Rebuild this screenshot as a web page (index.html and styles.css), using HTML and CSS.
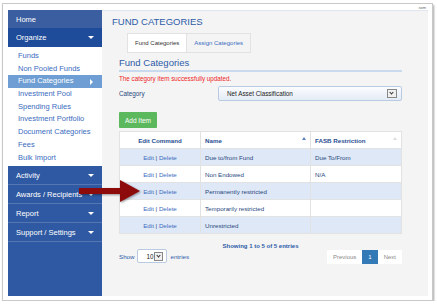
FILE: index.html
```html
<!DOCTYPE html>
<html lang="en">
  <head>
    <meta charset="UTF-8" />
    <meta name="viewport" content="width=device-width, initial-scale=1.0" />
    <title>Fund Categories</title>
    <link rel="stylesheet" href="styles.css">
  </head>
  <body>
    <div class="frame">
      <div class="topbar"><span class="user">som</span></div>
      <div class="app">
        <nav class="sidebar">
          <a class="nav-head home">Home</a>
          <a class="nav-head open">Organize <span class="caret"></span></a>
          <ul class="submenu">
            <li>Funds</li>
            <li>Non Pooled Funds</li>
            <li class="active">Fund Categories <span class="caret-right"></span></li>
            <li>Investment Pool</li>
            <li>Spending Rules</li>
            <li>Investment Portfolio</li>
            <li>Document Categories</li>
            <li>Fees</li>
            <li>Bulk Import</li>
          </ul>
          <a class="nav-head">Activity <span class="caret"></span></a>
          <a class="nav-head">Awards / Recipients <span class="caret"></span></a>
          <a class="nav-head">Report <span class="caret"></span></a>
          <a class="nav-head">Support / Settings <span class="caret"></span></a>
        </nav>

        <main class="content">
          <h1 class="page-title">FUND CATEGORIES</h1>
          <div class="tabs">
            <span class="tab active">Fund Categories</span>
            <span class="tab">Assign Categories</span>
          </div>
          <section class="panel">
            <h2 class="panel-title">Fund Categories</h2>
            <p class="msg">The category item successfully updated.</p>
            <div class="field">
              <label>Category</label>
              <div class="select wide">
                <span>Net Asset Classification</span>
                <span class="drop"></span>
              </div>
            </div>
            <button class="add-btn">Add Item</button>
            <table class="grid">
              <thead>
                <tr>
                  <th class="center">Edit Command</th>
                  <th>Name <span class="sort up"></span></th>
                  <th>FASB Restriction <span class="sort both"></span></th>
                </tr>
              </thead>
              <tbody>
                <tr class="alt">
                  <td class="center"><a>Edit</a> | <a>Delete</a></td>
                  <td>Due to/from Fund</td>
                  <td>Due To/From</td>
                </tr>
                <tr>
                  <td class="center"><a>Edit</a> | <a>Delete</a></td>
                  <td>Non Endowed</td>
                  <td>N/A</td>
                </tr>
                <tr class="alt">
                  <td class="center"><a>Edit</a> | <a>Delete</a></td>
                  <td>Permanently restricted</td>
                  <td></td>
                </tr>
                <tr>
                  <td class="center"><a>Edit</a> | <a>Delete</a></td>
                  <td>Temporarily restricted</td>
                  <td></td>
                </tr>
                <tr class="alt">
                  <td class="center"><a>Edit</a> | <a>Delete</a></td>
                  <td>Unrestricted</td>
                  <td></td>
                </tr>
              </tbody>
            </table>
            <p class="info">Showing 1 to 5 of 5 entries</p>
            <div class="table-foot">
              <div class="length">
                Show
                <div class="select small">
                  <span>10</span>
                  <span class="drop"></span>
                </div>
                entries
              </div>
              <div class="pager">
                <span>Previous</span>
                <span class="current">1</span>
                <span>Next</span>
              </div>
            </div>
          </section>
        </main>
      </div>

      <svg class="arrow" width="64" height="26" viewBox="0 0 64 26">
        <polygon points="1,10 42,10 42,2 62,13 42,24 42,16 1,16" fill="#8e0b0b" />
      </svg>
    </div>
  </body>
</html>
```

FILE: styles.css
```css
body {
  margin: 0;
  background: #fff;
  font-family: "Liberation Sans", Arial, sans-serif;
}
.frame {
  position: relative;
  width: 431px;
  height: 298px;
  margin: 3px 0 0 2px;
  border: 1px solid #c8c8c8;
  box-shadow: 1px 2px 2px rgba(0, 0, 0, 0.35);
  box-sizing: border-box;
  padding: 0 4px 4px 5px;
  display: flex;
  flex-direction: column;
}
.topbar {
  height: 6px;
  display: flex;
  justify-content: flex-end;
  align-items: center;
}
.user {
  font-size: 4px;
  color: #666;
  margin-right: 2px;
}
.app {
  flex: 1;
  display: flex;
}

/* sidebar */
.sidebar {
  width: 95px;
  background: #2f5aa3;
  display: flex;
  flex-direction: column;
}
.nav-head {
  height: 18px;
  display: flex;
  align-items: center;
  justify-content: space-between;
  padding: 0 8px 0 8px;
  color: #fff;
  font-size: 7.5px;
  border-bottom: 1px solid #5576b0;
}
.nav-head.home {
  background: #3a5e9f;
  border-bottom: none;
}
.nav-head.open {
  background: #1e4b9a;
  border-bottom: none;
  height: 19px;
}
.caret {
  width: 0;
  height: 0;
  border-left: 3px solid transparent;
  border-right: 3px solid transparent;
  border-top: 3px solid #fff;
}
.submenu {
  list-style: none;
  margin: 0;
  padding: 3px 0 2px;
  background: #fff;
}
.submenu li {
  height: 12.7px;
  line-height: 12.7px;
  padding-left: 10px;
  color: #3b6cc0;
  font-size: 7.5px;
  display: flex;
  align-items: center;
  justify-content: space-between;
}
.submenu li.active {
  background: #6e9ed3;
  color: #fff;
  padding-right: 9px;
}
.caret-right {
  width: 0;
  height: 0;
  border-top: 3px solid transparent;
  border-bottom: 3px solid transparent;
  border-left: 3px solid #fff;
}

/* main */
.content {
  flex: 1;
  background: #f4f4f4;
  border-top: 1px solid #dfe6ef;
  padding: 0 26px 0 10px;
}
.page-title {
  margin: 5px 0 0;
  font-size: 9.5px;
  font-weight: normal;
  color: #2d5ba8;
}
.tabs {
  display: flex;
  margin: 6px 0 0 15px;
}
.tab {
  height: 18px;
  line-height: 18px;
  padding: 0 7px;
  font-size: 6px;
  color: #3b6cc0;
  border: 1px solid #e2e2e2;
}
.tab.active {
  background: #fff;
  color: #333;
  border-right: none;
}
.panel {
  margin-left: 7px;
}
.panel-title {
  margin: 4px 0 0;
  font-size: 9.5px;
  font-weight: normal;
  color: #2d5ba8;
  padding-bottom: 2px;
  border-bottom: 2px solid #c9d9ee;
}
.msg {
  margin: 3px 0 0;
  font-size: 6.3px;
  color: #ee1c1c;
}
.field {
  display: flex;
  align-items: center;
  justify-content: space-between;
  margin-top: 4px;
}
.field label {
  font-size: 6.3px;
  color: #27477e;
}
.select {
  display: flex;
  align-items: center;
  justify-content: space-between;
  background: linear-gradient(#fbfcfe, #e4ecf6);
  border: 1px solid #b9cbe3;
  border-radius: 2px;
  box-sizing: border-box;
  font-size: 6.3px;
  color: #222;
}
.select.wide {
  width: 184px;
  height: 15px;
  padding: 0 4px 0 8px;
}
.drop {
  width: 8px;
  height: 7px;
  border: 1px solid #888;
  background: #f0f0f0;
  position: relative;
}
.drop::after {
  content: "";
  position: absolute;
  left: 2px;
  top: 1px;
  width: 2px;
  height: 2px;
  border-right: 1px solid #333;
  border-bottom: 1px solid #333;
  transform: rotate(45deg);
}
.add-btn {
  margin-top: 11px;
  height: 16px;
  padding: 0 6px;
  border: none;
  border-radius: 1px;
  background: #5cb85c;
  color: #fff;
  font-family: inherit;
  font-size: 6.5px;
}
.grid {
  width: 283px;
  margin-top: 3px;
  border-collapse: collapse;
  font-size: 6.2px;
  background: #fff;
}
.grid th,
.grid td {
  height: 16px;
  padding: 0 4px;
  border: 1px solid #e2e2e2;
  text-align: left;
  color: #27477e;
}
.grid th {
  font-weight: bold;
  color: #284e92;
  position: relative;
}
.grid th:first-child {
  width: 72px;
}
.grid th:nth-child(2) {
  width: 101px;
}
.grid .center {
  text-align: center;
}
.grid td a {
  color: #3b6cc0;
}
.grid tr.alt td {
  background: #dfe8f6;
}
.sort {
  position: absolute;
  right: 4px;
  top: 5px;
  width: 0;
  height: 0;
  border-left: 2px solid transparent;
  border-right: 2px solid transparent;
}
.sort.up {
  border-bottom: 3px solid #5a7fc0;
}
.sort.both {
  border-bottom: 3px solid #ddd;
}
.info {
  width: 283px;
  margin: 9px 0 0;
  text-align: center;
  font-size: 6px;
  font-weight: bold;
  color: #2d5ba8;
}
.table-foot {
  width: 283px;
  display: flex;
  justify-content: space-between;
  align-items: flex-start;
  margin-top: 0;
}
.length {
  display: flex;
  align-items: center;
  gap: 3px;
  margin-top: 0;
  font-size: 6.2px;
  color: #2d5ba8;
}
.select.small {
  width: 30px;
  height: 14px;
  padding: 0 3px 0 8px;
  background: #fff;
}
.pager {
  display: flex;
  margin-top: 1px;
  background: #fff;
  font-size: 6px;
  color: #888;
}
.pager span {
  height: 14px;
  line-height: 14px;
  padding: 0 6px;
}
.pager .current {
  background: #337ab7;
  color: #fff;
}

/* annotation arrow over the screenshot */
.arrow {
  position: absolute;
  left: 75px;
  top: 174px;
  filter: drop-shadow(1px 1px 1px rgba(0, 0, 0, 0.4));
}
```
